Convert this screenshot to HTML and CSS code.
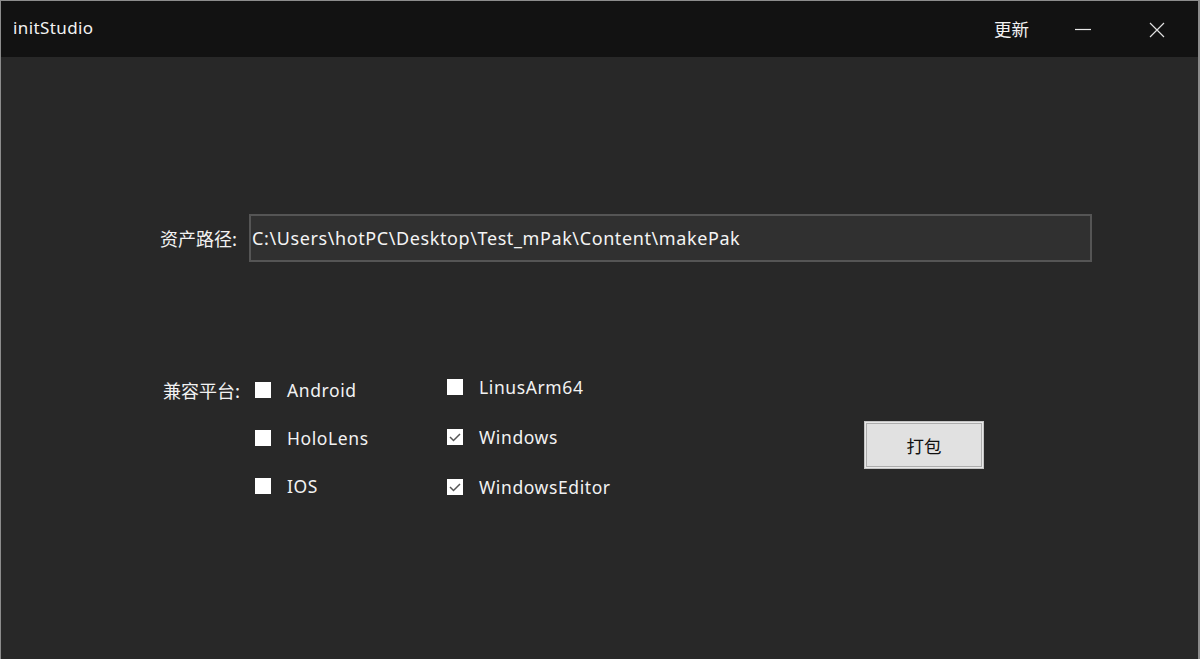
FILE: index.html
```html
<!DOCTYPE html>
<html lang="zh-CN">
<head>
<meta charset="utf-8">
<title>initStudio</title>
<link rel="stylesheet" href="styles.css">
</head>
<body>
<div class="window">
  <header class="titlebar">
    <div class="app-title">initStudio</div>
    <div class="title-actions">
      <span class="update">更新</span>
      <span class="win-btn minimize"><svg width="16" height="16" viewBox="0 0 16 16"><path d="M0 8.5H16" stroke="#e8e8e8" stroke-width="1.2"/></svg></span>
      <span class="win-btn close"><svg width="16" height="16" viewBox="0 0 16 16"><path d="M1 1L15 15M15 1L1 15" stroke="#e0e0e0" stroke-width="1.2"/></svg></span>
    </div>
  </header>
  <main class="content">
    <div class="path-row">
      <label class="field-label path-label">资产路径:</label>
      <div class="path-input">C:\Users\hotPC\Desktop\Test_mPak\Content\makePak</div>
    </div>
    <div class="platform-row">
      <div class="field-label platform-label">兼容平台:</div>
      <div class="col col-1">
        <div class="check-item"><span class="box"></span><span class="ck-text">Android</span></div>
        <div class="check-item"><span class="box"></span><span class="ck-text">HoloLens</span></div>
        <div class="check-item"><span class="box"></span><span class="ck-text">IOS</span></div>
      </div>
      <div class="col col-2">
        <div class="check-item"><span class="box"></span><span class="ck-text">LinusArm64</span></div>
        <div class="check-item"><span class="box checked"><svg width="16" height="16" viewBox="0 0 16 16"><path d="M3 8L6.5 11.5L13 5" fill="none" stroke="#555" stroke-width="1.5"/></svg></span><span class="ck-text">Windows</span></div>
        <div class="check-item"><span class="box checked"><svg width="16" height="16" viewBox="0 0 16 16"><path d="M3 8L6.5 11.5L13 5" fill="none" stroke="#555" stroke-width="1.5"/></svg></span><span class="ck-text">WindowsEditor</span></div>
      </div>
      <div class="action">
        <button class="pack-btn">打包</button>
      </div>
    </div>
  </main>
</div>
</body>
</html>
```

FILE: styles.css
```css
* { box-sizing: border-box; }
html, body { margin: 0; padding: 0; background: #282828; }
body {
  font-family: "Noto Sans", "Noto Sans CJK SC", sans-serif;
  color: #f2f2f2;
  font-size: 16px;
}
.window {
  width: 1200px;
  height: 659px;
  border-top: 1px solid #8c8c8c;
  border-left: 1px solid #8c8c8c;
  border-right: 2px solid #8c8c8c;
  background: #282828;
  display: flex;
  flex-direction: column;
}
.titlebar {
  height: 56px;
  background: #121212;
  display: flex;
  align-items: center;
  justify-content: space-between;
  padding-left: 12px;
}
.app-title {
  font-size: 17px;
  letter-spacing: 0.4px;
  line-height: 20px;
  margin-top: -2px;
}
.title-actions {
  display: flex;
  align-items: center;
  height: 100%;
}
.update {
  font-family: "Noto Sans CJK SC", sans-serif;
  font-size: 17.5px;
  margin-right: 46px;
  margin-top: -1px;
}
.win-btn { display: flex; align-items: center; }
.minimize { margin-right: 58px; }
.close { margin-right: 33px; margin-top: 1px; }
.content {
  flex: 1;
  padding-top: 157px;
}
.path-row {
  display: flex;
  align-items: center;
}
.field-label {
  font-family: "Noto Sans CJK SC", sans-serif;
  font-size: 18px;
  line-height: 20px;
}
.path-label { margin-left: 159px; width: 89px; }
.path-input {
  width: 843px;
  height: 48px;
  background: #303030;
  border: 2px solid #555;
  display: flex;
  align-items: center;
  padding-left: 1px;
  padding-bottom: 1px;
  font-size: 18px;
  letter-spacing: 0.6px;
  color: #f4f4f4;
}
.platform-row {
  display: flex;
  margin-top: 115px;
}
.platform-label { margin-left: 162px; width: 92px; margin-top: 3px; }
.col { display: flex; flex-direction: column; }
.col-1 { width: 192px; padding-top: 3px; gap: 28px; }
.col-2 { width: 417px; gap: 30px; }
.check-item {
  display: flex;
  align-items: center;
  height: 20px;
}
.box {
  width: 16px;
  height: 16px;
  background: #fff;
  margin-right: 16px;
  display: flex;
}
.ck-text { font-size: 17.5px; letter-spacing: 0.6px; line-height: 20px; margin-top: -1px; }
.action { padding-top: 44px; }
.pack-btn {
  width: 120px;
  height: 48px;
  background: #e1e1e1;
  border: 1px solid #c4c4c4;
  box-shadow: inset 0 0 0 1px #e8e8e8, inset 0 0 0 2px #adadad;
  font-family: "Noto Sans CJK SC", sans-serif;
  font-size: 17.5px;
  color: #111;
  padding: 0;
}
```
